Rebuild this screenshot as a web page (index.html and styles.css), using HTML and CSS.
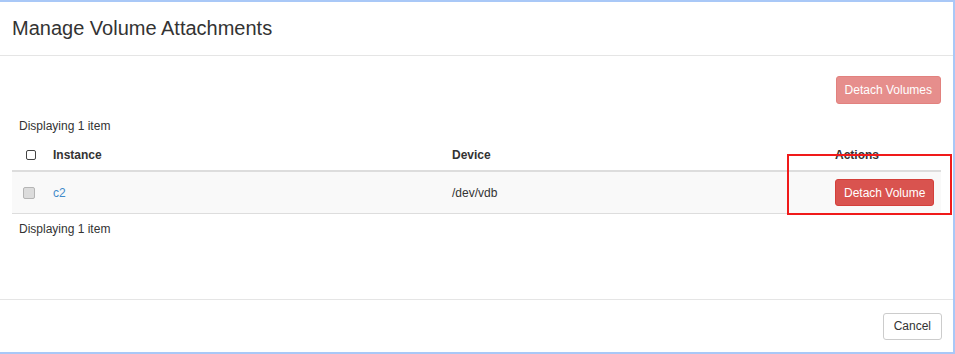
FILE: index.html
```html
<!DOCTYPE html>
<html lang="en">
  <head>
    <meta charset="UTF-8" />
    <title>Manage Volume Attachments</title>
    <link rel="stylesheet" href="styles.css">
  </head>
  <body>
    <div class="frame">
      <div class="modal-header">
        <h3>Manage Volume Attachments</h3>
      </div>

      <div class="modal-body">
        <div class="table-actions">
          <button class="btn btn-danger disabled">Detach Volumes</button>
        </div>
        <div class="count">Displaying 1 item</div>
        <table>
          <colgroup>
            <col class="c-check" />
            <col class="c-inst" />
            <col class="c-dev" />
            <col />
          </colgroup>
          <thead>
            <tr>
              <th><span class="cb cb-head"></span></th>
              <th>Instance</th>
              <th>Device</th>
              <th>Actions</th>
            </tr>
          </thead>
          <tbody>
            <tr>
              <td><span class="cb cb-row"></span></td>
              <td><a href="#">c2</a></td>
              <td>/dev/vdb</td>
              <td><button class="btn btn-danger">Detach Volume</button></td>
            </tr>
          </tbody>
        </table>
        <div class="count">Displaying 1 item</div>
      </div>

      <div class="modal-footer">
        <button class="btn btn-default">Cancel</button>
      </div>

      <div class="highlight"></div>
    </div>
  </body>
</html>
```

FILE: styles.css
```css
body {
  margin: 0;
  font-family: "Liberation Sans", Arial, sans-serif;
  font-size: 12px;
  color: #333;
  background: #fff;
}
.frame {
  position: relative;
  box-sizing: border-box;
  width: 955px;
  height: 354px;
  border-top: 2px solid #a9c8f7;
  border-right: 2px solid #a9c8f7;
  border-bottom: 2px solid #a9c8f7;
  display: flex;
  flex-direction: column;
}
.modal-header {
  height: 53px;
  border-bottom: 1px solid #e5e5e5;
  display: flex;
  align-items: center;
  padding-left: 12px;
}
.modal-header h3 {
  margin: 0;
  font-size: 20px;
  font-weight: normal;
  color: #333;
}
.modal-body {
  flex: 1;
  padding: 20px 12px 0 12px;
}
.table-actions {
  display: flex;
  justify-content: flex-end;
  margin-bottom: 14px;
}
.count {
  padding-left: 7px;
  line-height: 16px;
}
table {
  width: 929px;
  table-layout: fixed;
  border-collapse: collapse;
  margin: 6px 0 7px 0;
}
.c-check {
  width: 33px;
}
.c-inst {
  width: 399px;
}
.c-dev {
  width: 383px;
}
th {
  text-align: left;
  font-weight: bold;
  height: 30px;
  padding: 0 8px;
  vertical-align: middle;
  border-bottom: 2px solid #ddd;
}
td {
  height: 41px;
  padding: 0 8px;
  vertical-align: middle;
  background: #f9f9f9;
  border-bottom: 1px solid #ddd;
}
th:first-child,
td:first-child {
  padding: 0 0 0 11px;
}
a {
  color: #428bca;
  text-decoration: none;
}
.cb {
  display: block;
  box-sizing: border-box;
  border-radius: 2px;
}
.cb-head {
  width: 10px;
  height: 10px;
  margin-left: 3px;
  border: 1.5px solid #444;
}
.cb-row {
  width: 12px;
  height: 12px;
  background: #dcdcdc;
  border: 1px solid #b5b5b5;
}
.btn {
  font-family: "Liberation Sans", Arial, sans-serif;
  font-size: 12px;
  white-space: nowrap;
  border-radius: 3px;
  padding: 0 8px;
  height: 28px;
  border: 1px solid transparent;
  cursor: pointer;
}
.btn-danger {
  background: #d9534f;
  border-color: #d43f3a;
  color: #fff;
}
.btn-danger.disabled {
  opacity: 0.65;
}
td .btn {
  height: 27px;
  padding: 0 8px;
}
.btn-default {
  background: #fff;
  border-color: #ccc;
  color: #333;
  height: 27px;
  padding: 0 10px;
}
.modal-footer {
  height: 52px;
  border-top: 1px solid #e5e5e5;
  display: flex;
  justify-content: flex-end;
  align-items: center;
  padding-right: 11px;
}
.highlight {
  position: absolute;
  left: 787px;
  top: 152px;
  width: 161px;
  height: 57px;
  border: 2px solid #f01a1a;
}
```
